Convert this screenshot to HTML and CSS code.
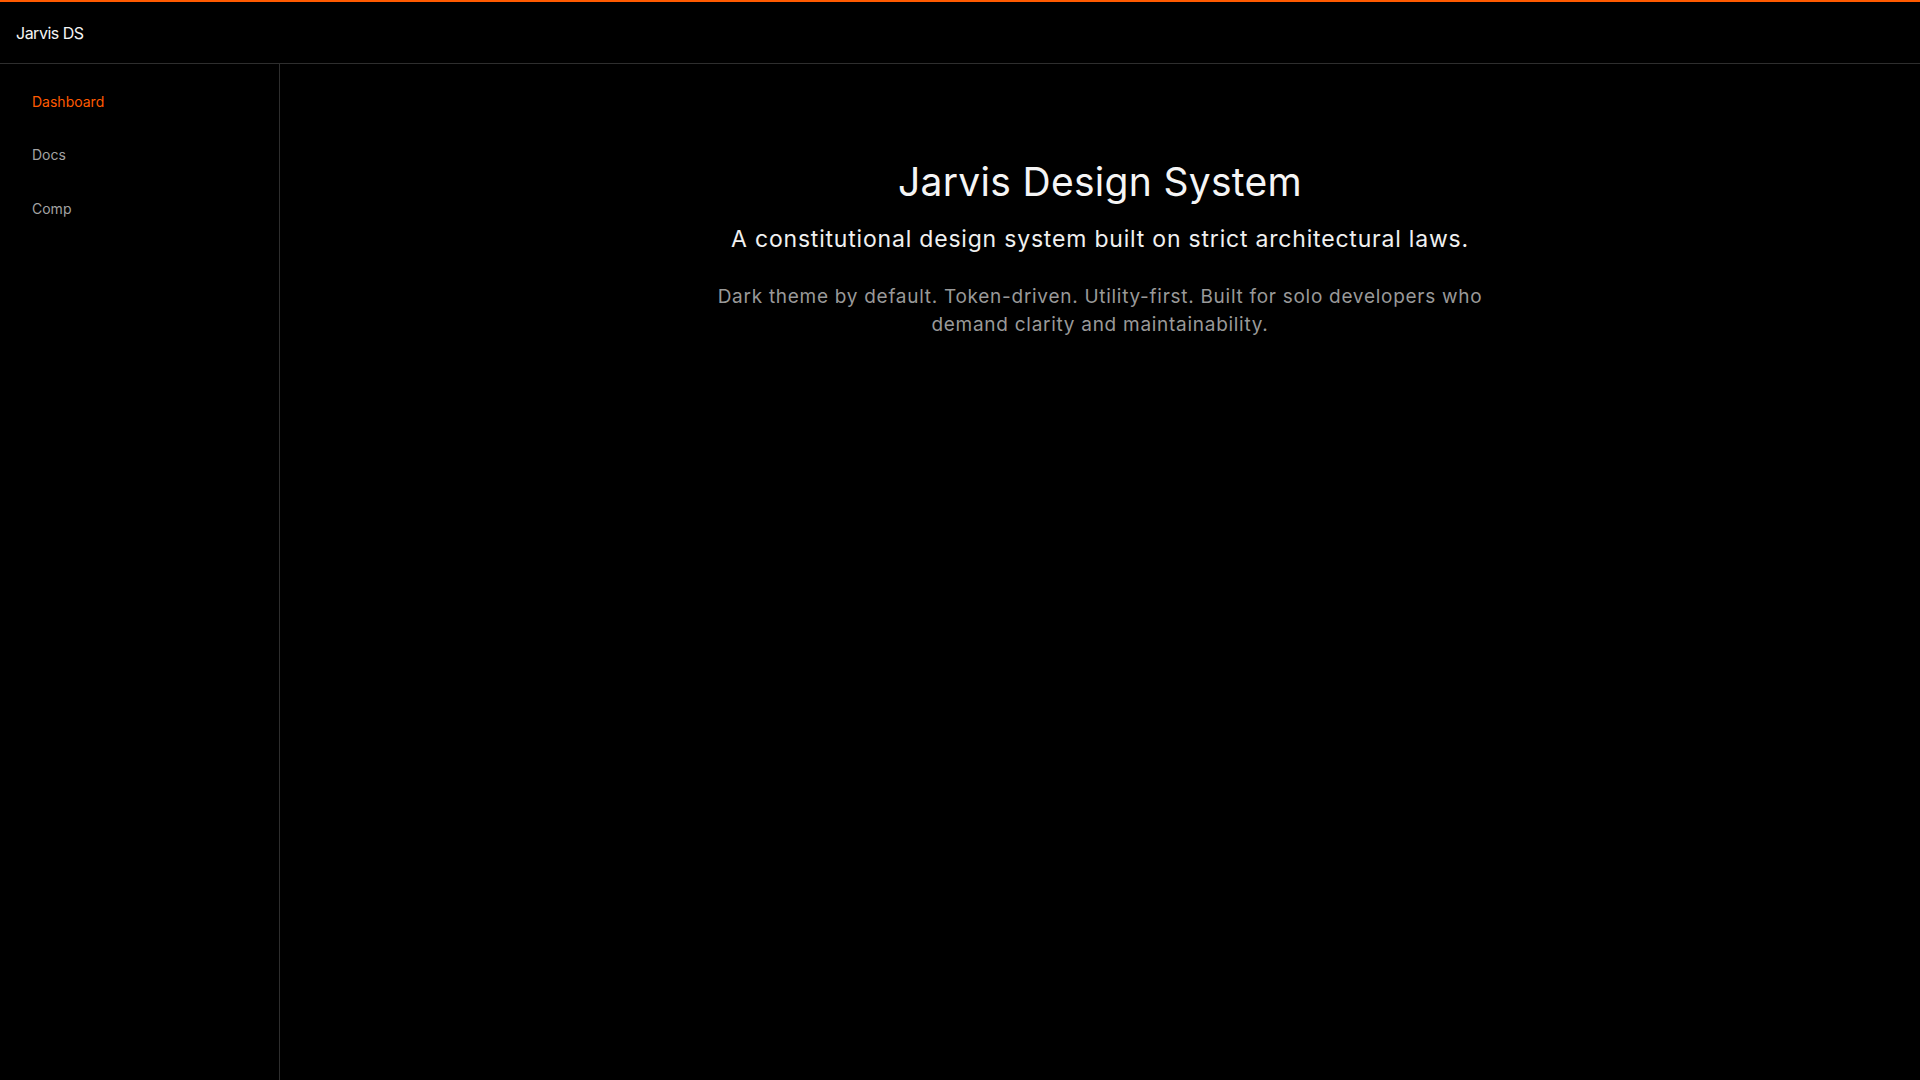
FILE: index.html
```html
<!DOCTYPE html>
<html lang="en">
<head>
<meta charset="utf-8">
<title>Jarvis DS</title>
<link rel="stylesheet" href="styles.css">
</head>
<body>
<div class="app">
  <header class="topbar">
    <span class="brand">Jarvis DS</span>
  </header>
  <div class="shell">
    <aside class="sidebar">
      <nav class="nav">
        <a class="nav-item active" href="#">Dashboard</a>
        <a class="nav-item" href="#">Docs</a>
        <a class="nav-item" href="#">Comp</a>
      </nav>
    </aside>
    <main class="main">
      <section class="hero">
        <h1 class="hero-title">Jarvis Design System</h1>
        <p class="hero-subtitle">A constitutional design system built on strict architectural laws.</p>
        <p class="hero-text">Dark theme by default. Token-driven. Utility-first. Built for solo developers who demand clarity and maintainability.</p>
      </section>
    </main>
  </div>
</div>
</body>
</html>
```
FILE: styles.css
```css
* { box-sizing: border-box; }
html, body { margin: 0; padding: 0; height: 100%; }
body {
  background: #000;
  color: #f5f5f5;
  font-family: Inter, "Liberation Sans", sans-serif;
}
.app {
  display: flex;
  flex-direction: column;
  height: 100vh;
}
.topbar {
  height: 64px;
  flex: none;
  display: flex;
  align-items: center;
  padding: 0 16px;
  border-top: 2px solid #ff5a00;
  border-bottom: 1px solid #2e2e2e;
}
.brand {
  font-size: 16px;
  line-height: 24px;
  letter-spacing: -0.5px;
  color: #f5f5f5;
}
.shell {
  flex: 1;
  display: flex;
  min-height: 0;
}
.sidebar {
  width: 280px;
  flex: none;
  border-right: 1px solid #2e2e2e;
}
.nav {
  display: flex;
  flex-direction: column;
  padding: 11px 16px;
}
.nav-item {
  display: block;
  padding: 16px 16px;
  font-size: 14px;
  line-height: 21.33px;
  color: #a3a3a3;
  text-decoration: none;
}
.nav-item.active { color: #ff5a00; }
.main {
  flex: 1;
  padding: 95px 32px 32px;
}
.hero {
  max-width: 790px;
  margin: 0 auto;
  text-align: center;
}
.hero-title {
  margin: 0;
  font-size: 39px;
  line-height: 46.8px;
  font-weight: 400;
  letter-spacing: 0.3px;
  color: #f5f5f5;
}
.hero-subtitle {
  margin: 17px 0 0;
  font-size: 23px;
  line-height: 32px;
  letter-spacing: 0.8px;
  color: #f0f0f0;
}
.hero-text {
  margin: 28px 0 0;
  font-size: 19px;
  line-height: 28px;
  letter-spacing: 0.72px;
  color: #999;
}
```
